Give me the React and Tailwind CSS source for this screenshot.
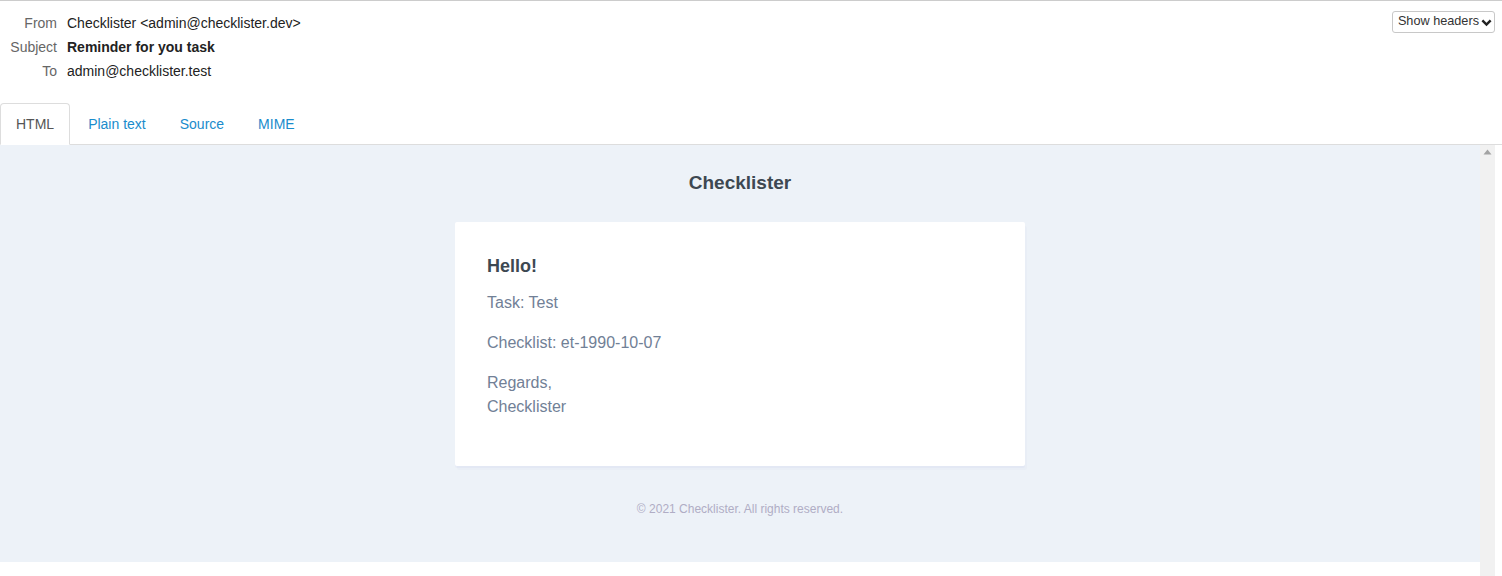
import { useState } from 'react';

const headers = [
  { label: 'From', value: 'Checklister <admin@checklister.dev>' },
  { label: 'Subject', value: 'Reminder for you task', bold: true },
  { label: 'To', value: 'admin@checklister.test' },
];

const tabs = ['HTML', 'Plain text', 'Source', 'MIME'];

export default function App() {
  const [active, setActive] = useState('HTML');

  return (
    <div className="h-[576px] overflow-hidden bg-white font-['Liberation_Sans',Arial,sans-serif] text-[14px] text-[#333]">
      <div className="h-px bg-[#cccccc]" />

      <div className="flex justify-between pt-[10px]">
        <table className="border-collapse">
          <tbody>
            {headers.map((h) => (
              <tr key={h.label} className="h-[24px]">
                <td className="w-[67px] pr-[10px] text-right align-middle text-[#666]">{h.label}</td>
                <td className={`align-middle text-[#222] ${h.bold ? 'font-bold' : ''}`}>{h.value}</td>
              </tr>
            ))}
          </tbody>
        </table>
        <button className="mr-[7px] flex h-[22px] items-center gap-[2px] self-start rounded-[3px] border border-[#c8c8c8] bg-white pl-[5px] pr-[2px] text-[12.7px] text-[#333]">
          Show headers
          <svg width="11" height="11" viewBox="0 0 16 16" fill="none" stroke="#222" strokeWidth="3.6" strokeLinejoin="miter">
            <path d="M2 5 8 11l6-6" />
          </svg>
        </button>
      </div>

      <div className="mt-[20px] flex h-[42px] border-b border-[#dddddd]">
        {tabs.map((t) => (
          <button
            key={t}
            onClick={() => setActive(t)}
            className={`mr-[2px] -mb-px h-[42px] rounded-t-[4px] border px-[15px] text-[14px] ${
              active === t
                ? 'border-[#dddddd] border-b-white bg-white text-[#555]'
                : 'border-transparent text-[#1a8ccc]'
            }`}
          >
            {t}
          </button>
        ))}
      </div>

      <div className="flex h-[431px] w-[1495px]">
        <div className="flex-1">
          <div className="bg-[#edf2f8] font-['Liberation_Sans',Arial,sans-serif]">
            <div className="flex h-[77px] items-center justify-center text-[19px] font-bold text-[#3d4852]">
              Checklister
            </div>
            <div className="flex justify-center">
              <div className="w-[570px] rounded-[2px] bg-white px-[32px] pb-[32px] pt-[32px] shadow-[0_2px_0_rgba(0,0,150,0.025),2px_4px_0_rgba(0,0,150,0.015)]">
                <h1 className="mb-[13px] text-[18px] font-bold leading-[24px] text-[#3d4852]">Hello!</h1>
                <p className="mb-[16px] text-[16px] leading-[24px] text-[#718096]">Task: Test</p>
                <p className="mb-[16px] text-[16px] leading-[24px] text-[#718096]">Checklist: et-1990-10-07</p>
                <p className="mb-[15px] text-[16px] leading-[24px] text-[#718096]">
                  Regards,
                  <br />
                  Checklister
                </p>
              </div>
            </div>
            <div className="flex h-[96px] items-center justify-center pb-[10px] text-[12px] text-[#b0adc5]">
              © 2021 Checklister. All rights reserved.
            </div>
          </div>
        </div>
        <div className="relative w-[15px] bg-[#f1f1f1]">
          <svg className="absolute left-[3px] top-[4px]" width="9" height="6" viewBox="0 0 9 6">
            <path d="M4.5 0.5 8.5 5.5H0.5Z" fill="#a3a3a3" />
          </svg>
        </div>
      </div>
    </div>
  );
}
